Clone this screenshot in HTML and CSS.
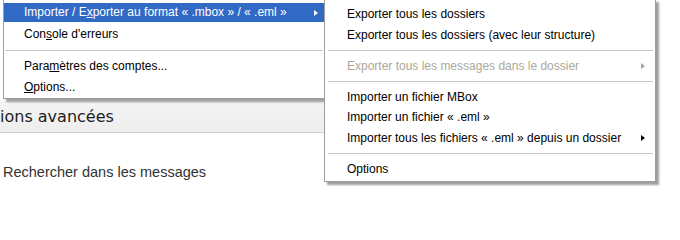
FILE: index.html
```html
<!DOCTYPE html>
<html lang="fr">
<head>
<meta charset="utf-8">
<title>Menu</title>
<link rel="stylesheet" href="styles.css">
</head>
<body>
<div class="page">
  <div class="band">ions avancées</div>
  <div class="search">Rechercher dans les messages</div>
</div>

<div class="menu menu-main">
  <div class="item hl"><span>Importer / E<u>x</u>porter au format « .mbox » / « .eml »</span><span class="arrow"></span></div>
  <div class="item"><span>Con<u>s</u>ole d'erreurs</span></div>
  <div class="sep"></div>
  <div class="item"><span>Para<u>m</u>ètres des comptes...</span></div>
  <div class="item"><span><u>O</u>ptions...</span></div>
</div>

<div class="menu menu-sub">
  <div class="item"><span>Exporter tous les dossiers</span></div>
  <div class="item"><span>Exporter tous les dossiers (avec leur structure)</span></div>
  <div class="sep"></div>
  <div class="item disabled"><span>Exporter tous les messages dans le dossier</span><span class="arrow"></span></div>
  <div class="sep"></div>
  <div class="item"><span>Importer un fichier MBox</span></div>
  <div class="item"><span>Importer un fichier « .eml »</span></div>
  <div class="item"><span>Importer tous les fichiers « .eml » depuis un dossier</span><span class="arrow"></span></div>
  <div class="sep"></div>
  <div class="item"><span>Options</span></div>
</div>
</body>
</html>
```

FILE: styles.css
```css
html, body {
  margin: 0;
  padding: 0;
  background: #ffffff;
}

body {
  width: 680px;
  height: 208px;
  overflow: hidden;
  position: relative;
  font-family: "Liberation Sans", Arial, sans-serif;
  color: #000;
}

.page {
  padding-top: 101px;
}

.band {
  width: 640px;
  height: 32px;
  background: linear-gradient(#f4f4f4, #eeeeee);
  border-bottom: 1px solid #d2d2d2;
  display: flex;
  align-items: center;
  font-family: "DejaVu Sans", sans-serif;
  font-size: 16px;
  color: #1e1e1e;
  box-sizing: border-box;
}

.search {
  margin-top: 29px;
  padding-left: 3px;
  font-size: 14.5px;
  line-height: 20px;
  color: #333333;
}

.menu {
  position: absolute;
  background: #ffffff;
  border: 1px solid #9c9c9c;
  box-shadow: 3px 3px 2px rgba(0, 0, 0, 0.38);
  font-size: 12px;
  font-family: "Liberation Sans", Arial, sans-serif;
}

.menu-main {
  left: 3px;
  top: -1px;
  width: 320px;
  padding: 3px 0 1px;
  z-index: 1;
}

.menu-sub {
  left: 324px;
  top: -1px;
  width: 330px;
  padding: 4px 0 2px;
  z-index: 2;
}

.item {
  height: 20.5px;
  line-height: 20.5px;
  display: flex;
  align-items: center;
  justify-content: space-between;
  white-space: nowrap;
}

.menu-main .item {
  padding: 0 6px 0 20px;
}

.menu-sub .item {
  padding: 0 10px 0 22px;
}

.item.hl {
  background: #316ac5;
  color: #ffffff;
  height: 19px;
  line-height: 19px;
  margin-bottom: 1.5px;
}

.item.disabled {
  color: #aca899;
}

.item u {
  text-decoration: underline;
  text-underline-offset: 1px;
}

.arrow {
  width: 0;
  height: 0;
  border-left: 4px solid currentColor;
  border-top: 3.5px solid transparent;
  border-bottom: 3.5px solid transparent;
}

.menu-main .sep {
  height: 1px;
  background: #c6c6c6;
  margin: 5.5px 1px 5.5px 1px;
}

.menu-sub .sep {
  height: 1px;
  background: #c6c6c6;
  margin: 4.5px 2px 5px 3px;
}
```
